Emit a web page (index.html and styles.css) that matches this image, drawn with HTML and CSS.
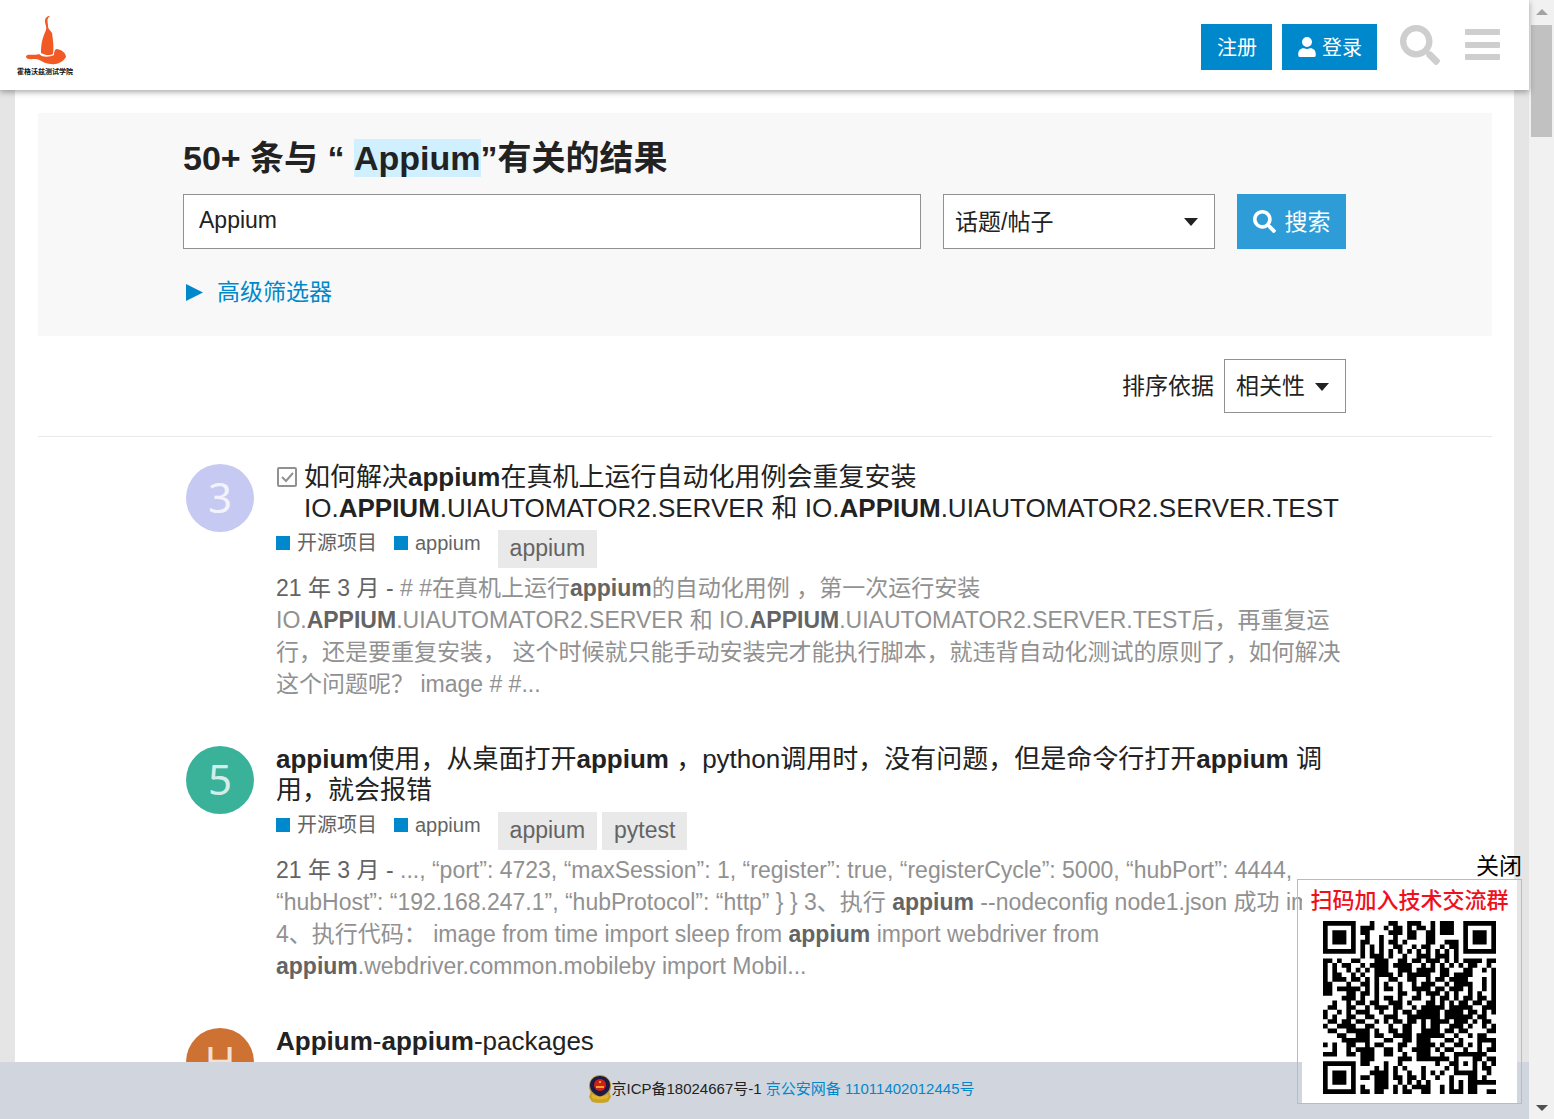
FILE: index.html
```html
<!DOCTYPE html>
<html lang="zh-CN">
<head>
<meta charset="utf-8">
<meta name="viewport" content="width=device-width, initial-scale=1">
<title>Appium 的搜索结果 - 霍格沃兹测试学院</title>
<link rel="stylesheet" href="styles.css">
</head>
<body>
<div class="app">
  <header class="site-header">
    <a class="logo" href="#" aria-label="首页">
      <svg width="45" height="50" viewBox="0 0 45 50" aria-hidden="true"><path fill="#f15a24" d="M25 1c-3 0-5 2-5 5 0 4 2 5 1 9-3 7-5 12-5 23 3 2 9 3 12 1 1-7 0-14-1-21-2-3-4-4-4-7 0-4-2-7 2-10zM1 42c0-4 6-1 13-3 4 4 11 3 15 1 0-2 0-4 2-6 5 0 10 4 10 8-3 5-9 8-15 7-7 0-9-4-15-5-5 0-9 1-10-2z"/></svg>
      <span class="logo-name">霍格沃兹测试学院</span>
    </a>
    <nav class="header-actions">
      <button class="btn">注册</button>
      <button class="btn btn-login"><svg width="18" height="20" viewBox="0 0 448 512" fill="currentColor" aria-hidden="true"><path d="M224 256a128 128 0 1 0 0-256 128 128 0 0 0 0 256zm90 32h-17a174 174 0 0 1-146 0h-17C60 288 0 348 0 422v42a48 48 0 0 0 48 48h352a48 48 0 0 0 48-48v-42c0-74-60-134-134-134z"/></svg>登录</button>
      <button class="icon-btn icon-search" aria-label="搜索"><svg width="40" height="40" viewBox="0 0 512 512" fill="currentColor"><use href="#search"/></svg></button>
      <button class="icon-btn" aria-label="菜单"><svg width="36" height="32" viewBox="0 0 36 32" fill="currentColor"><rect y="0" width="35" height="6" rx="1"/><rect y="13" width="35" height="6" rx="1"/><rect y="25" width="35" height="6" rx="1"/></svg></button>
    </nav>
  </header>

  <main class="main">
    <div class="content">
      <section class="search-panel">
        <h1>50+ 条与 “ <mark>Appium</mark>”有关的结果</h1>
        <form class="search-bar">
          <input class="field" type="text" value="Appium" aria-label="搜索词">
          <span class="select"><select class="field" aria-label="搜索类型"><option>话题/帖子</option></select></span>
          <button class="btn-search" type="button"><svg width="23" height="23" viewBox="0 0 512 512" fill="currentColor" aria-hidden="true"><path id="search" d="M505 443L405 343c-4-5-11-7-17-7h-16c28-35 44-80 44-128C416 93 323 0 208 0S0 93 0 208s93 208 208 208c48 0 93-16 128-44v16c0 6 2 13 7 17l100 100c9 9 24 9 34 0l28-28c9-10 9-25 0-34zM208 336a128 128 0 1 1 0-256 128 128 0 0 1 0 256z"/></svg>搜索</button>
        </form>
        <a class="filters" href="#"><svg width="17" height="17" viewBox="0 0 17 17" fill="currentColor" aria-hidden="true"><path d="M0 0l17 8.500L0 17z"/></svg>高级筛选器</a>
      </section>

      <div class="sort-row">
        <label for="sort">排序依据</label>
        <span class="select select-sort"><select class="field" id="sort"><option>相关性</option></select></span>
      </div>

      <div class="results">
        <article class="result">
          <span class="avatar avatar-lilac">3</span>
          <div class="result-body">
            <h2 class="with-status"><svg class="status" width="22" height="22" viewBox="0 0 22 22" fill="none" stroke="#919191" stroke-width="2" aria-hidden="true"><rect x="2" y="2" width="18" height="18" rx="1"/><path d="M6 11l4 4 7-8"/></svg><a href="#">如何解决<b>appium</b>在真机上运行自动化用例会重复安装<br>IO.<b>APPIUM</b>.UIAUTOMATOR2.SERVER 和 IO.<b>APPIUM</b>.UIAUTOMATOR2.SERVER.TEST</a></h2>
            <div class="meta"><a class="category" href="#">开源项目</a><a class="category" href="#">appium</a><span class="tags"><a class="tag" href="#">appium</a></span></div>
            <p class="blurb"><span class="date">21 年 3 月 -</span> # #在真机上运行<b>appium</b>的自动化用例 ，第一次运行安装<br>IO.<b>APPIUM</b>.UIAUTOMATOR2.SERVER 和 IO.<b>APPIUM</b>.UIAUTOMATOR2.SERVER.TEST后，再重复运<br>行，还是要重复安装， 这个时候就只能手动安装完才能执行脚本，就违背自动化测试的原则了，如何解决<br>这个问题呢？ image # #...</p>
          </div>
        </article>
        <article class="result">
          <span class="avatar avatar-green">5</span>
          <div class="result-body">
            <h2><a href="#"><b>appium</b>使用，从桌面打开<b>appium</b> ，python调用时，没有问题，但是命令行打开<b>appium</b> 调<br>用，就会报错</a></h2>
            <div class="meta"><a class="category" href="#">开源项目</a><a class="category" href="#">appium</a><span class="tags"><a class="tag" href="#">appium</a><a class="tag" href="#">pytest</a></span></div>
            <p class="blurb"><span class="date">21 年 3 月 -</span> ..., “port”: 4723, “maxSession”: 1, “register”: true, “registerCycle”: 5000, “hubPort”: 4444,<br>“hubHost”: “192.168.247.1”, “hubProtocol”: “http” } } 3、执行 <b>appium</b> --nodeconfig node1.json 成功 image<br>4、执行代码： image from time import sleep from <b>appium</b> import webdriver from<br><b>appium</b>.webdriver.common.mobileby import Mobil...</p>
          </div>
        </article>
        <article class="result">
          <span class="avatar avatar-orange">H</span>
          <div class="result-body"><h2><a href="#"><b>Appium</b>-<b>appium</b>-packages</a></h2></div>
        </article>
      </div>
    </div>
  </main>

  <footer class="site-footer">
    <svg width="24" height="28" viewBox="0 0 24 28" aria-hidden="true"><path fill="#c9a227" d="M3 16L1 22l3 5q8 2 16 0l3-5-2-6z"/><circle cx="12" cy="11" r="11" fill="#b8923a"/><path fill="#1d1b45" d="M12 1c6 0 10 4 10 9 0 6-4 9-10 12C6 19 2 16 2 10 2 5 6 1 12 1z"/><circle cx="12" cy="10" r="6" fill="#cf2015"/><path fill="#f0a030" d="M8 11h8v2H8zM11 6h2v2h-2z"/><path fill="#dfb52f" d="M4 19q8 5 16 0v4q-8 3-16 0z"/></svg><span>京ICP备18024667号-1 <a href="#">京公安网备 11011402012445号</a></span>
  </footer>

  <aside class="qr-popup">
    <button class="close">关闭</button>
    <div class="qr-frame"><div class="qr-card">
      <strong>扫码加入技术交流群</strong>
      <svg id="qr" width="173" height="173" viewBox="0 0 37 37" role="img" aria-label="二维码"></svg>
    </div></div>
  </aside>
</div>
<div class="scrollbar" aria-hidden="true"><i class="arrow-up"></i><i class="thumb"></i><i class="arrow-down"></i></div>
<script src="qr.js"></script>
</body>
</html>
```
FILE: styles.css
```css
* { box-sizing: border-box; }
body {
  margin: 0;
  height: 100vh;
  display: flex;
  overflow: hidden;
  background: #e5e5e5;
  color: #222;
  font: 23px/32px "Liberation Sans", "Noto Sans CJK SC", sans-serif;
}
a { color: inherit; text-decoration: none; }
button, input, select { font: inherit; color: inherit; }
button { border: 0; cursor: pointer; }

.app { position: relative; flex: 1; min-width: 0; display: flex; flex-direction: column; }

.site-header {
  position: relative;
  z-index: 2;
  flex: none;
  height: 90px;
  padding: 0 28px 0 17px;
  display: flex;
  justify-content: space-between;
  background: #fff;
  box-shadow: 0 2px 6px rgba(0, 0, 0, .35);
}
.logo { display: flex; flex-direction: column; padding-top: 15px; }
.logo svg { margin-left: 8px; }
.logo-name { font: bold 7px/12px "Noto Sans CJK SC", sans-serif; color: #111; }
.header-actions { display: flex; align-items: center; padding-top: 4px; }
.btn {
  height: 46px;
  padding: 2px 15px 0 16px;
  margin-right: 10px;
  display: flex;
  align-items: center;
  gap: 6px;
  background: #08c;
  color: #fff;
  font-size: 20px;
}
.btn svg { margin-bottom: 2px; }
.btn-login { margin-right: 23px; }
.icon-btn { padding: 0; display: flex; background: none; color: #cecece; margin-bottom: 4px; }
.icon-search { margin-right: 25px; }

.main { flex: 1; min-height: 0; overflow: hidden; margin: 0 15px; padding: 23px 22px 0 23px; background: #fff; }
.search-panel { background: #f8f8f8; padding: 23px 146px 27px 145px; }
h1 { margin: 0 0 14px; font-size: 34px; line-height: 44px; white-space: nowrap; }
mark { background: #d1f0ff; color: inherit; }
.search-bar { display: grid; grid-template-columns: 1fr 272px 109px; column-gap: 22px; }
.field { width: 100%; height: 55px; border: 1px solid #919191; border-radius: 0; background: #fff; }
input.field { padding: 0 15px 2px; }
select.field { appearance: none; padding: 0 11px; }
.select { position: relative; }
.select::after {
  content: "";
  position: absolute;
  right: 17px;
  top: 24px;
  border: 7px solid transparent;
  border-top: 8px solid #222;
  border-bottom: 0;
  pointer-events: none;
}
.btn-search { padding: 0; display: flex; align-items: center; justify-content: center; gap: 9px; background: #2e9dd7; color: #fff; }
.filters { display: inline-flex; align-items: center; gap: 14px; margin: 27px 0 0 3px; color: #08c; }
.filters svg { flex: none; }

.sort-row { display: flex; justify-content: flex-end; align-items: center; gap: 10px; padding: 23px 146px; border-bottom: 1px solid #e9e9e9; }
.select-sort { width: 122px; }
.select-sort .field { display: block; height: 54px; }

.results { padding: 25px 0 0 148px; }
.result { display: flex; gap: 22px; margin-bottom: 44px; }
.avatar {
  flex: none;
  width: 68px;
  height: 68px;
  margin-top: 2px;
  border-radius: 50%;
  color: rgba(255, 255, 255, .8);
  font: 42px/66px "Noto Sans", sans-serif;
  text-align: center;
}
.avatar-lilac { background: #c6caf2; }
.avatar-green { background: #3ab29a; }
.avatar-orange { background: #ce7233; }
.result-body { white-space: nowrap; }
h2 { margin: 0; font-size: 26px; line-height: 31px; font-weight: 400; }
.with-status { display: flex; gap: 6px; }
.status { flex: none; margin-top: 4px; }
.meta { display: flex; margin-top: 6px; color: #646464; }
.category { display: flex; align-items: center; height: 26px; gap: 7px; margin-right: 17px; font-size: 20px; }
.category::before { content: ""; width: 14px; height: 14px; background: #08c; }
.tags { display: flex; gap: 5px; }
.tag { height: 38px; padding: 0 12px; line-height: 36px; background: #e9e9e9; }
.blurb { margin: 4px 0 0; color: #919191; }
.blurb b, .date { color: #646464; }

.site-footer { flex: none; height: 57px; display: flex; align-items: center; justify-content: center; padding: 0 0 3px 33px; background: #d1d6de; font-size: 15px; line-height: 20px; }
.site-footer a { color: #08c; }

.qr-popup { position: absolute; z-index: 3; right: 7px; bottom: 15px; display: flex; flex-direction: column; align-items: flex-end; }
.close { padding: 0; height: 26px; line-height: 26px; background: none; color: #000; }
.qr-frame { width: 225px; padding: 0 4px; border: 1px solid #bbb; }
.qr-card { height: 223px; display: flex; flex-direction: column; align-items: center; background: #fff; }
.qr-card strong { font-size: 22px; line-height: 41px; font-weight: 500; color: #f0101c; white-space: nowrap; }

.scrollbar { flex: none; width: 25px; padding: 9px 2px 8px; display: flex; flex-direction: column; align-items: center; background: #f1f1f1; }
.arrow-up { border: 6px solid transparent; border-top: 0; border-bottom-color: #a3a3a3; margin-bottom: 10px; }
.thumb { width: 21px; height: 112px; background: #c1c1c1; }
.arrow-down { margin-top: auto; border: 6px solid transparent; border-bottom: 0; border-top-color: #505050; }
```
FILE: qr.js
```
// Each string is one row of modules; "#" is dark.
const rows = [
  "#######...#...##..###..#.###..#######",
  "#.....#.###..#.##.#.##.#.###..#.....#",
  "#.###.#.##....###.##..##.###..#.###.#",
  "#.###.#..#..#..#..##..##......#.###.#",
  "#.###.#.##..#.##.#....##..###.#.###.#",
  "#.....#.#.#.#..##..#.##..#.##.#.....#",
  "#######.#.#.#.#.#.#.#.#.#.#.#.#######",
  "........#.###.#..#..###.###.#........",
  "##.#..##...###..##.##.###.#.#.####.##",
  "#.#.##..#.####.####..#.#.#.#.#.##..#.",
  "#.#..#.#.#.###..###.####.##...##..#.#",
  "#.##..#.#..####.#.#####..##.####....#",
  "#.###.##.#.#..##..##..#.##.####...#.#",
  "##...#..##.#.#..#..#.###..#.####..#.#",
  "##.#####.#.#.##.#..####.##.###.#..#.#",
  "##...##.##.#....##..#.###.#.#..#.#..#",
  "....###.#..#.##.#..##..#.##.#.##.##.#",
  "..#..#.##.##..###.#...##.#.#.##.##.##",
  ".##..##..#.###.##..#.#####.#####..###",
  "#..#.#.###..#..#.##.#####.####.##.#.#",
  "#.#..##..##..###..#######.######.##..",
  ".##.##.##..#.#.##.##.#.####.###.#.##.",
  "#..####..##...#..##..#.##..###.#..#.#",
  ".##..#####.#..##.##..####.##.##....##",
  "...##..###.##..####.######..#..#.##..",
  "....######...##..##.###...##.#...####",
  "#.#..##..#.##...##..####.#..##.#.#..#",
  "..#..#.####..##.#..####.#.##..#..#.##",
  "###..##.###..##..#..###..#..#######..",
  "........###.....###.#######.#...##.##",
  "#######.##...#..#.......#..##.#.#.#.#",
  "#.....#....#.#.#.#...#....#.#...#.##.",
  "#.###.#...####.#..#..#.#.#..#####..#.",
  "#.###.#.##.###.##.##.#..#..#...##.#..",
  "#.###.#....###..#.#.#.#....#.#.######",
  "#.....#.#..###.#.#.####..#.#.#.##....",
  "#######.##.##..#.##..##..#.###.##..##"
];
const runs = rows.map((row, y) =>
  [...row.matchAll(/#+/g)].map(m => `M${m.index} ${y}h${m[0].length}v1h-${m[0].length}z`).join("")
).join("");
const path = document.createElementNS("http://www.w3.org/2000/svg", "path");
path.setAttribute("d", runs);
document.getElementById("qr").append(path);
```
